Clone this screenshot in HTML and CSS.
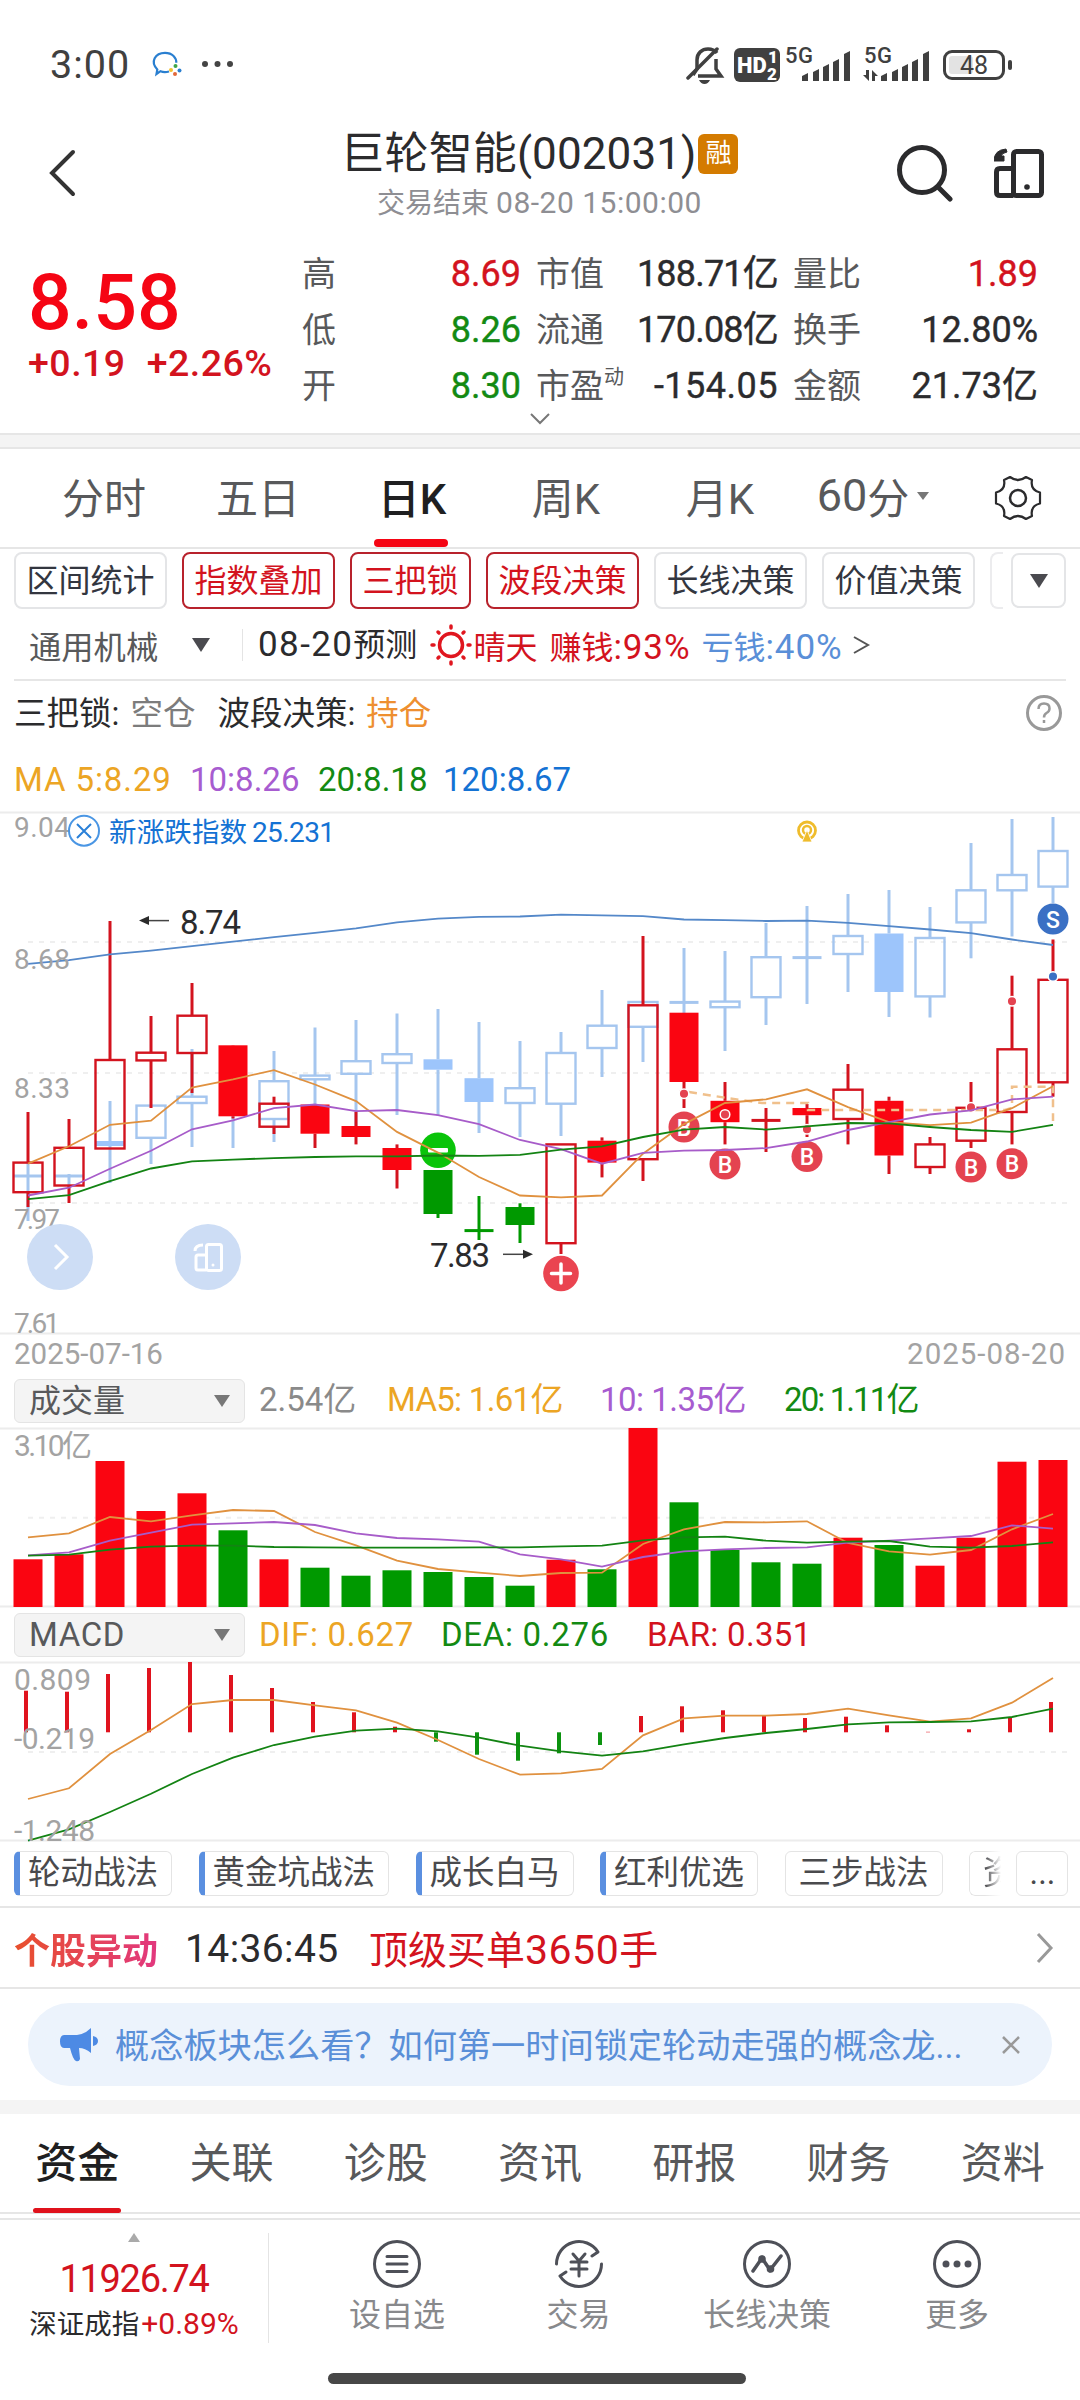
FILE: index.html
```html
<!doctype html>
<html lang="zh-CN">
<head>
    <meta charset="UTF-8">
    <meta name="viewport" content="width=device-width, initial-scale=1.0">
    <title>巨轮智能(002031)</title>
    <link rel="stylesheet" href="styles.css">
</head>
<body>
<div class="status-bar">
    <span class="status-time">3:00</span>
    <svg class="status-chat" width="36" height="36" viewBox="0 0 36 36">
        <path d="M21 25.500c-3 .8-6 .8-8.500-.3L8.500 28l.8-4.500C2 16 7 6.800 17 6.800c7.500 0 11.500 5 11.300 10" fill="none" stroke="#2a7fd0" stroke-width="2.200"/>
        <circle cx="27.500" cy="20" r="2" fill="#3fa64b"/>
        <circle cx="31.500" cy="24.500" r="2" fill="#2a7fd0"/>
        <circle cx="27" cy="28" r="2" fill="#e2683a"/>
        <circle cx="23" cy="24" r="2" fill="#f2c230"/>
    </svg>
    <svg class="status-dots" width="34" height="8"><circle cx="4" cy="4" r="3" fill="#444"/><circle cx="16.500" cy="4" r="3" fill="#444"/><circle cx="29" cy="4" r="3" fill="#444"/></svg>
    <svg class="status-icons" width="330" height="40" viewBox="0 0 330 40">
        <g fill="none" stroke="#404040" stroke-width="3.500">
            <path d="M7 31l4-6v-9c0-7 5-11 11-11 4 0 7 1.500 9 4M30 15v10l5 7H12"/>
            <path d="M2 34L31 5" stroke-linecap="round"/>
        </g>
        <path d="M13 36h11q-2 4-5.500 4T13 36z" fill="#404040"/>
        <rect x="48" y="4" width="46" height="34" rx="6" fill="#404040"/>
        <text x="51" y="29" class="hd-text">HD</text>
        <text x="82" y="19" class="hd-num">1</text>
        <text x="81" y="36" class="hd-num">2</text>
        <text x="99" y="19" class="net-text" textLength="28">5G</text>
        <text x="178" y="19" class="net-text" textLength="28">5G</text>
        <g fill="#404040">
            <path d="M116 32l6-3v8h-6zM127 28l6-3v12h-6zM137 23l6-3v17h-6zM147 18l6-3v22h-6zM158 10l6-3v30h-6z"/>
            <path d="M195 32l6-3v8h-6zM206 28l6-3v12h-6zM216 23l6-3v17h-6zM226 18l6-3v22h-6zM237 10l6-3v30h-6z"/>
            <path d="M180 26h3v11l-6-6h3zM186 37V26l6 6h-3v5z"/>
            <rect x="322" y="16" width="4" height="10" rx="2"/>
        </g>
        <rect x="258.500" y="7.500" width="59" height="27" rx="7.500" fill="none" stroke="#404040" stroke-width="3"/>
        <rect x="263" y="12" width="24" height="18" rx="3" fill="#e3e3e3"/>
        <text x="274" y="29.500" class="battery-text" textLength="28">48</text>
    </svg>
</div>

<div class="header">
    <svg class="back" width="30" height="50" viewBox="0 0 30 50"><path d="M25 4L4 25l21 21" fill="none" stroke="#333" stroke-width="4" stroke-linecap="round"/></svg>
    <div class="header-title">
        <div class="stock-name"><span>巨轮智能(002031)</span><i class="badge">融</i></div>
        <div class="stock-time">交易结束 <em>08-20 15:00:00</em></div>
    </div>
    <svg class="search" width="60" height="60" viewBox="0 0 60 60">
        <g fill="none" stroke="#2b2b2d" stroke-width="5" stroke-linecap="round"><circle cx="27" cy="28" r="22.500"/><path d="M43 45l12 12"/></g>
    </svg>
    <svg class="device" width="50" height="52" viewBox="0 0 50 52">
        <g fill="none" stroke="#2b2b2d" stroke-width="5"><rect x="19.500" y="3.500" width="28" height="44" rx="3"/><path d="M19.500 20.500H6q-3.500 0-3.500 3.500v20q0 3.500 3.500 3.500h13.500"/></g>
        <path d="M12 1Q0 2 0 13h10v-5H7q1-3 6-4z" fill="#2b2b2d" stroke="#2b2b2d"/>
        <circle cx="33" cy="39" r="2.800" fill="#2b2b2d"/>
    </svg>
</div>

<div class="quote">
    <div class="quote-price">
        <div class="price">8.58</div>
        <div class="change"><span>+0.19</span><span>+2.26%</span></div>
    </div>
    <div class="quote-col col-1">
        <p><label>高</label><b class="red">8.69</b></p>
        <p><label>低</label><b class="green">8.26</b></p>
        <p><label>开</label><b class="green">8.30</b></p>
    </div>
    <div class="quote-col col-2">
        <p><label>市值</label><b>188.71亿</b></p>
        <p><label>流通</label><b>170.08亿</b></p>
        <p><label>市盈<sup>动</sup></label><b class="pe">-154.05</b></p>
    </div>
    <div class="quote-col col-3">
        <p><label>量比</label><b class="red">1.89</b></p>
        <p><label>换手</label><b>12.80%</b></p>
        <p><label>金额</label><b>21.73亿</b></p>
    </div>
    <svg class="quote-more" width="20" height="12" viewBox="0 0 20 12"><path d="M1 1l9 9 9-9" fill="none" stroke="#777" stroke-width="2"/></svg>
</div>

<div class="band"></div>

<div class="k-tabs">
    <span class="k-tab">分时</span>
    <span class="k-tab">五日</span>
    <span class="k-tab active">日K</span>
    <span class="k-tab">周K</span>
    <span class="k-tab">月K</span>
    <span class="k-tab min"><em>60</em>分<i class="tri small"></i></span>
    <svg class="gear" width="48" height="48" viewBox="-24 -24 48 48">
        <path d="M-8-21Q0-15 8-21L14-18Q12-8 22-5.500V5.500Q12 8 14 18L8 21Q0 15-8 21L-14 18Q-12 8-22 5.500V-5.500Q-12-8-14-18Z" fill="none" stroke="#2b2b2d" stroke-width="2.200" stroke-linejoin="round"/>
        <circle r="8" fill="none" stroke="#2b2b2d" stroke-width="2.500"/>
    </svg>
</div>

<div class="chips">
    <span class="chip">区间统计</span>
    <span class="chip on">指数叠加</span>
    <span class="chip on">三把锁</span>
    <span class="chip on">波段决策</span>
    <span class="chip">长线决策</span>
    <span class="chip">价值决策</span>
    <span class="chip-cut"></span>
    <span class="chip-more"><i class="tri"></i></span>
</div>

<div class="forecast">
    <span class="industry">通用机械</span>
    <i class="tri"></i>
    <span class="forecast-date"><em>08-20</em>预测</span>
    <svg class="sun" width="42" height="42" viewBox="-21 -21 42 42">
        <circle r="11.500" fill="none" stroke="#e0161f" stroke-width="3.500"/>
        <path d="M0-19v2M0 19v-2M-19 0h2M19 0h-2M-13-13l1 1M13 13l-1-1M13-13l-1 1M-13 13l1-1" stroke="#e0161f" stroke-width="3.500" stroke-linecap="round"/>
    </svg>
    <span class="sunny">晴天</span>
    <span class="earn">赚钱<em>:93%</em></span>
    <span class="lose">亏钱<em>:40%</em></span>
    <svg width="18" height="20" viewBox="0 0 18 20"><path d="M1 2l14 8-14 8" fill="none" stroke="#555" stroke-width="2"/></svg>
</div>

<div class="signals">
    <span>三把锁:</span><span class="empty">空仓</span>
    <span class="wave">波段决策:</span><span class="hold">持仓</span>
    <svg class="help" width="38" height="38" viewBox="0 0 38 38">
        <circle cx="19" cy="19" r="16.500" fill="none" stroke="#999" stroke-width="3"/>
        <path d="M13.500 15q0-5.500 5.500-5.500t5.500 5q0 3-3 4.500-2.500 1.500-2.500 4.500M19 26v3" fill="none" stroke="#999" stroke-width="2.500"/>
    </svg>
</div>

<div class="ma-row">
    <span class="c-orange ma-5">MA 5:8.29</span>
    <span class="c-purple ma-10">10:8.26</span>
    <span class="c-green ma-20">20:8.18</span>
    <span class="c-blue">120:8.67</span>
</div>

<svg id="id-kline" class="chart kline" width="1080" height="522" viewBox="0 0 1080 522"></svg>

<div class="dates"><span>2025-07-16</span><span class="date-end">2025-08-20</span></div>

<div class="indicator vol-head">
    <span class="select">成交量<i class="tri gray"></i></span>
    <span class="v-now">2.54亿</span>
    <span class="c-orange v-5">MA5: 1.61亿</span>
    <span class="c-purple v-10">10: 1.35亿</span>
    <span class="c-green v-20">20: 1.11亿</span>
</div>
<svg id="id-volume" class="chart" width="1080" height="179" viewBox="0 0 1080 179"></svg>

<div class="indicator macd-head">
    <span class="select macd-name">MACD<i class="tri gray"></i></span>
    <span class="c-orange m-dif">DIF: 0.627</span>
    <span class="c-green m-dea">DEA: 0.276</span>
    <span class="c-red m-bar">BAR: 0.351</span>
</div>
<svg id="id-macd" class="chart" width="1080" height="179" viewBox="0 0 1080 179"></svg>

<div class="tags">
    <span class="tag hot">轮动战法</span>
    <span class="tag hot">黄金坑战法</span>
    <span class="tag hot">成长白马</span>
    <span class="tag hot">红利优选</span>
    <span class="tag">三步战法</span>
    <span class="tag tag-cut">资</span>
    <span class="tag-more">...</span>
</div>

<div class="unusual">
    <span class="unusual-logo">个股异动</span>
    <span class="unusual-time">14:36:45</span>
    <span class="unusual-text">顶级买单<em>3650</em>手</span>
    <svg class="arrow" width="20" height="32" viewBox="0 0 20 32"><path d="M3 2l13 14L3 30" fill="none" stroke="#999" stroke-width="3"/></svg>
</div>

<div class="notice-wrap">
    <div class="notice">
        <svg class="horn" width="40" height="34" viewBox="0 0 40 34">
            <path d="M5 7h13Q26 6 32 0v25Q26 20 20 20l1 11q-1 3-4 2-3-1-6-13H5q-4 0-4-6.500T5 7zM34 8q5 1 5 5t-5 5z" fill="#4d8ae4"/>
        </svg>
        <span class="notice-text">概念板块怎么看？如何第一时间锁定轮动走强的概念龙...</span>
        <svg width="18" height="18" viewBox="0 0 18 18"><path d="M1 1l16 16M17 1L1 17" stroke="#999" stroke-width="2.500"/></svg>
    </div>
</div>

<div class="band-plain"></div>

<div class="info-tabs">
    <span class="info-tab active">资金</span>
    <span class="info-tab">关联</span>
    <span class="info-tab">诊股</span>
    <span class="info-tab">资讯</span>
    <span class="info-tab">研报</span>
    <span class="info-tab">财务</span>
    <span class="info-tab">资料</span>
</div>

<div class="bottom-bar">
    <div class="index-box">
        <i class="tri up"></i>
        <div class="index-num">11926.74</div>
        <div class="index-name">深证成指<em class="c-red">+0.89%</em></div>
    </div>
    <div class="bar-item item-1">
        <svg width="50" height="50" viewBox="-25 -25 50 50"><g fill="none" stroke="#4e5058" stroke-width="3" stroke-linecap="round"><circle r="22.500"/><path d="M-10-7.500h20M-10 0h20M-10 7.500h20"/></g></svg>
        <span>设自选</span>
    </div>
    <div class="bar-item item-2">
        <svg width="50" height="50" viewBox="-25 -25 50 50"><g fill="none" stroke="#4e5058" stroke-width="3" stroke-linecap="round" stroke-linejoin="round"><path d="M-22.500 0A22.500 22.500 0 0 1 19-12L13-8M22.500 0A22.500 22.500 0 0 1-19 12l6-4"/><path d="M-6-10l6 7 6-7M0-3v15M-8-2H8M-8 5H8"/></g></svg>
        <span>交易</span>
    </div>
    <div class="bar-item item-3">
        <svg width="50" height="50" viewBox="-25 -25 50 50"><circle r="22.500" fill="none" stroke="#4e5058" stroke-width="3"/><path d="M-14 7L-5-6 3 6 14-8" fill="none" stroke="#4e5058" stroke-width="3.500" stroke-linecap="round"/><circle cx="-5" cy="-5" r="3.800" fill="#4e5058"/><circle cx="3.500" cy="5" r="3.800" fill="#4e5058"/></svg>
        <span>长线决策</span>
    </div>
    <div class="bar-item item-4">
        <svg width="50" height="50" viewBox="-25 -25 50 50"><circle r="22.500" fill="none" stroke="#4e5058" stroke-width="3"/><g fill="#4e5058"><circle cx="-11" r="3.500"/><circle r="3.500"/><circle cx="11" r="3.500"/></g></svg>
        <span>更多</span>
    </div>
</div>
<div class="home-bar"></div>

<script>
    const e = (sel) => document.querySelector(sel)
    const xOf = (i) => 28 + i * 41

    const color = {
        red: '#fa0511', redLine: '#d3131e', green: '#009900', blue: '#a5c6ef', blueFill: '#9dc5fb',
        orange: '#e0913f', purple: '#a75cc9', darkGreen: '#138313', ma120: '#5488c9',
    }

    const line = (x1, y1, x2, y2, stroke, width = 2) =>
        `<line x1="${x1}" y1="${y1}" x2="${x2}" y2="${y2}" stroke="${stroke}" stroke-width="${width}"/>`

    const dash = (y) =>
        `<line x1="28" y1="${y}" x2="1072" y2="${y}" stroke="#efefef" stroke-width="2" stroke-dasharray="5 6"/>`

    const frame = (h) => line(0, 0.5, 1080, 0.5, '#ececec') + line(0, h - 0.5, 1080, h - 0.5, '#ececec')

    const curve = (ys, stroke) => {
        const points = ys.map((y, i) => `${xOf(i)},${y}`).join(' ')
        return `<polyline points="${points}" fill="none" stroke="${stroke}" stroke-width="1.8"/>`
    }

    const text = (x, y, s, cls, len = 0) =>
        `<text x="${x}" y="${y}" class="${cls}"${len ? ` textLength="${len}"` : ''}>${s}</text>`

    // [high, top, bottom, low, type]  h: hollow, f: filled, g: green, d: doji
    const candle = (row, i, stroke, fill) => {
        const [hi, top, bottom, lo, type] = row
        const x = xOf(i)
        const c = type === 'g' ? color.green : stroke
        let s = ''
        if (hi < top) s += line(x, hi, x, top, c, 3)
        if (lo > bottom) s += line(x, bottom, x, lo, c, 3)
        if (type === 'h') {
            s += `<rect x="${x - 14.5}" y="${top}" width="29" height="${bottom - top}" fill="none" stroke="${c}" stroke-width="2.4"/>`
        } else if (bottom === top) {
            s += line(x - 14.5, top, x + 14.5, top, c, 3)
        } else {
            s += `<rect x="${x - 14.5}" y="${top}" width="29" height="${bottom - top}" fill="${type === 'g' ? color.green : fill}"/>`
        }
        return s
    }

    const stock = [
        [300, 350.6, 380.2, 395, 'h'], [307, 335.8, 373.5, 391, 'h'], [109, 248, 336.5, 336.5, 'h'],
        [204, 240.7, 248.4, 296, 'h'], [171, 203.7, 241, 281, 'h'], [233, 233.3, 304.3, 306.5, 'f'],
        [284.7, 291.7, 314.7, 322, 'h'], [292, 292.5, 321.7, 336, 'f'], [300, 314, 325, 332.4, 'f'],
        [332.4, 336, 358, 376.5, 'f'], [358, 358, 402, 406, 'g'], [384, 418.6, 418.6, 428, 'g'],
        [391.3, 395, 413, 431, 'g'], [332, 332.4, 431.2, 442, 'h'], [325.4, 328.7, 350.6, 365.4, 'f'],
        [124, 193.3, 347.2, 369, 'h'], [200.7, 200.7, 270, 296, 'f'], [270, 288.8, 310.2, 332.4, 'f'],
        [296, 308.4, 308.4, 340, 'd'], [292, 296, 303.2, 325, 'f'], [252, 277.7, 307, 332.4, 'h'],
        [284.7, 288.8, 343.5, 362, 'f'], [325, 332.4, 355, 362, 'h'], [270, 295.8, 328.7, 336, 'h'],
        [163.7, 237.3, 300, 332.4, 'h'], [127.5, 167.8, 270.3, 284.7, 'h'],
    ]

    const overlay = [
        [350, 364, 364, 409, 'd'], [362, 364, 364, 376, 'd'], [289, 329, 334, 371, 'f'],
        [293, 293.6, 325.8, 352, 'h'], [237, 284.7, 291, 335, 'h'], [300, 302, 304, 336, 'f'],
        [239, 269.2, 307, 330, 'h'], [215.5, 263.6, 267.3, 300, 'h'], [208, 249.2, 261.8, 314, 'h'],
        [201.5, 242.2, 251, 303, 'h'], [197, 247.3, 257.7, 303.6, 'f'], [210, 266.2, 290, 321, 'f'],
        [229, 276.2, 291, 325, 'h'], [220, 241, 291.7, 324, 'h'], [178, 213.7, 236, 265, 'h'],
        [190, 190, 214.8, 250, 'h'], [136, 190.4, 190.4, 201, 'd'], [139, 189.6, 195.2, 239, 'h'],
        [111, 145.2, 185.2, 213, 'h'], [94, 145.6, 145.6, 192, 'd'], [82, 124, 142, 180, 'h'],
        [78, 121.5, 180, 205, 'f'], [95, 126, 184.4, 205.5, 'h'], [31, 78.3, 110.4, 146.3, 'h'],
        [7, 63, 78.3, 124.5, 'h'], [5, 39, 74.6, 91, 'h'],
    ]

    const ma = {
        5: [351.7, 334.3, 312.8, 308.7, 275.5, 267.3, 258.1, 272.5, 289.1, 319.9, 340.6, 365, 383.5, 385.3, 383.5, 341.7, 312.1, 291, 287.3, 277.3, 295.1, 310.2, 313.2, 310.6, 296.2, 274.3],
        10: [383.5, 375.7, 356.8, 338.7, 317.3, 308.4, 296.2, 292.5, 299.1, 298, 303.2, 312.1, 328, 337.2, 351.7, 340.9, 338.7, 338, 336.1, 329.5, 318, 310.2, 302.5, 298.4, 287.3, 284.7],
        20: [387.2, 383.1, 369.1, 356.5, 349.4, 347.6, 346.1, 345, 344.3, 344.3, 343.5, 343.9, 342.8, 337.6, 334.3, 325, 317.6, 315, 317.6, 314.3, 311, 311.3, 315, 318, 319.9, 312.8],
        120: [151.9, 148.2, 142.3, 138.6, 134.1, 129.7, 125.2, 120.8, 116.4, 110.4, 106.7, 104.9, 104.5, 102.7, 103.4, 104.2, 107.5, 108.2, 109, 108.6, 110.8, 114.1, 117.5, 121.2, 127.5, 133],
    }

    const mark = (i, y, letter, fill) =>
        `<circle cx="${xOf(i)}" cy="${y}" r="15.5" fill="${fill}"/>` + text(xOf(i), y + 8.5, letter, 'mark')

    const dot = (i, y, fill) =>
        `<circle cx="${xOf(i)}" cy="${y}" r="4.8" fill="${fill}" stroke="#fff" stroke-width="1.5"/>`

    const drawKline = () => {
        const bg = '#e44350'
        let s = frame(522) + dash(130) + dash(261) + dash(391)
        s += overlay.map((r, i) => candle(r, i, color.blue, color.blueFill)).join('')
        s += stock.map((r, i) => candle(r, i, color.redLine, color.red)).join('')
        s += [[16, 315], [17, 352], [19, 344.6], [23, 355], [24, 351.7]].map(([i, y]) => mark(i, y, 'B', bg)).join('')
        s += mark(25, 107, 'S', '#3a70c4')
        s += '<circle cx="438" cy="338.300" r="17.800" fill="#0ac40a"/><rect x="428" y="336" width="20" height="4.500" rx="1" fill="#fff"/>'
        s += '<circle cx="561" cy="461.500" r="17.800" fill="#ea4450"/><path d="M551.500 461.500h19M561 452v19" stroke="#fff" stroke-width="3.500" stroke-linecap="round"/>'
        s += '<path d="M689 280l38 6 35 5h46v7h197l7-2v-21.300h41V309" fill="none" stroke="#f0c08c" stroke-width="2.500" stroke-dasharray="8 6"/>'
        s += [[16, 281.7], [17, 302.5], [19, 317.3], [23, 295.4], [24, 189.3]].map(([i, y]) => dot(i, y, bg)).join('')
        s += dot(25, 164.5, '#3a70c4')
        s += curve(ma[120], color.ma120) + curve(ma[5], color.orange) + curve(ma[10], color.purple) + curve(ma[20], color.darkGreen)
        s += [['9.04', 25], ['8.68', 156.7], ['8.33', 286], ['7.97', 417], ['7.61', 521]].map(([t, y]) => text(14, y, t, 'axis', t[0] === '7' ? 46 : 56)).join('')
        // overlay index name
        s += '<circle cx="84" cy="18.700" r="15" fill="#fff" stroke="#4a96e4" stroke-width="2"/><path d="M77 12l14 14M91 12L77 26" stroke="#2a80d8" stroke-width="2"/>'
        s += text(109, 29.5, '新涨跌指数', 'index-label', 138) + text(252, 30, '25.231', 'index-value', 83)
        // high and low of the range
        s += text(180, 121.5, '8.74', 'peak', 61) + line(147, 108.6, 169, 108.6, '#444', 1.5) + '<path d="M139 108.600l10-4.500v9z" fill="#2b2b2b"/>'
        s += text(430, 455.3, '7.83', 'peak', 60) + line(503, 442.3, 525, 442.3, '#444', 1.5) + '<path d="M533 442.300l-10-4.500v9z" fill="#2b2b2b"/>'
        // broadcast mark
        s += '<circle cx="807" cy="18.500" r="8.500" fill="none" stroke="#efbc2c" stroke-width="2.800"/><circle cx="807" cy="18" r="4" fill="none" stroke="#efbc2c" stroke-width="2.500"/><path d="M807 18l5 12h-10z" fill="#efbc2c" stroke="#fff" stroke-width=".8"/>'
        // floating buttons
        s += '<g fill="#cdddf5"><circle cx="60" cy="445" r="33"/><circle cx="208" cy="445" r="33"/></g>'
        s += '<g fill="none" stroke="#fff" stroke-width="3"><path d="M55 433l12 12-12 12"/><rect x="206.500" y="432.500" width="15" height="26" rx="2"/><path d="M206 443h-8q-2 0-2 2v11q0 2 2 2h8M195 439q0-6 8-6" /></g><circle cx="213" cy="453" r="1.500" fill="#fff"/>'
        e('#id-kline').innerHTML = s
    }

    const drawVolume = () => {
        const tops = [131.3, 126.3, 33, 83, 65.3, 102.3, 131.3, 139.7, 147.7, 142.3, 144, 149, 157.7, 131.7, 141.3, 0, 74.3, 122, 134.3, 135.7, 109.7, 117, 137.7, 109.7, 33.7, 32]
        const kinds = 'rrrrrgrggggggrgrggggrgrrrr'
        let s = frame(179) + dash(89.7)
        s += tops.map((y, i) => `<rect x="${xOf(i) - 14.5}" y="${y}" width="29" height="${179 - y}" fill="${kinds[i] === 'r' ? color.red : color.green}"/>`).join('')
        s += curve([109.3, 105.3, 89, 93.3, 87.3, 82, 83, 104, 117.3, 132.7, 141, 144.7, 148, 145, 144.7, 116, 101.3, 94, 94.3, 93.3, 115, 123.3, 126.7, 122, 101.3, 86], color.orange)
        s += curve([127.3, 124.3, 112.7, 104.7, 96.7, 95.3, 94, 97, 105.3, 110, 111.3, 113.7, 126.3, 131.3, 138.7, 129, 123.3, 121.3, 120, 119.3, 114.7, 112.7, 110.3, 108, 97.3, 100.7], color.purple)
        s += curve([127.7, 126.7, 121.7, 118.7, 117.7, 117.7, 119, 119.3, 119.7, 119.7, 119.7, 119.3, 119.3, 118.3, 117.7, 112.3, 109.3, 108.7, 112.7, 114.7, 113.7, 113, 118.7, 119.7, 118, 114.3], color.darkGreen)
        s += text(14, 28, '3.10亿', 'axis big', 78)
        e('#id-volume').innerHTML = s
    }

    const drawMacd = () => {
        const zero = 70.3
        const bars = [28.7, 29.7, 12, 6, 0, 13, 26, 40, 50.3, 64.7, 79.7, 92.7, 98.7, 91.3, 83, 54, 44.3, 48.3, 54, 56, 54.7, 63.3, 69.8, 67.3, 55, 40]
        let s = frame(179) + dash(90)
        s += bars.map((y, i) => line(xOf(i) - 2, zero, xOf(i) - 2, y, y < zero ? '#e0131e' : '#0c930f', 4)).join('')
        s += curve([137, 126.3, 92, 68, 42, 38, 38, 43.3, 48.3, 60.7, 78, 97, 112.7, 111.3, 107, 73.3, 56.3, 53.7, 53.7, 52, 46.7, 53.3, 59.7, 56.3, 40.7, 16], color.orange)
        s += curve([178.7, 167.3, 150, 131.7, 112, 95.7, 83, 74.7, 68.7, 66.7, 69.3, 75.7, 83.7, 89.3, 93.7, 89.3, 82.3, 76, 71, 67, 62.3, 60.3, 60, 59.3, 55, 46.7], color.darkGreen)
        s += text(14, 28, '0.809', 'axis big', 77) + text(14, 86.7, '-0.219', 'axis big', 81) + text(14, 178.7, '-1.248', 'axis big', 81)
        e('#id-macd').innerHTML = s
    }

    drawKline()
    drawVolume()
    drawMacd()
</script>
</body>
</html>
```

FILE: styles.css
```css
* {
    box-sizing: border-box;
}
body {
    margin: 0;
    width: 1080px;
    height: 2400px;
    overflow: hidden;
    background: #fff;
    color: #2b2b2d;
    font-family: Roboto, "Noto Sans CJK SC", sans-serif;
    font-size: 32px;
}
p {
    margin: 0;
}
i, b, em {
    font-style: normal;
    font-weight: 400;
}
svg {
    display: block;
    flex: none;
}
span {
    white-space: nowrap;
}
.red, .c-red {
    color: #d3131e;
}
.green, .c-green {
    color: #138a13;
}
.c-orange {
    color: #eca524;
}
.c-purple {
    color: #a75cd0;
}
.c-blue {
    color: #1472d4;
}
.tri {
    display: inline-block;
    flex: none;
    border: 9px solid transparent;
    border-top: 14px solid #4a4a4f;
    border-bottom: 0;
}
.tri.small {
    border-width: 8px 6px 0;
    border-top-color: #777;
    margin-left: 8px;
}
.tri.gray {
    border-width: 12px 8px 0;
    border-top-color: #777;
}
.tri.up {
    border-width: 0 6px 9px;
    border-bottom: 9px solid #aaa;
}

/* status bar */
.status-bar {
    display: flex;
    align-items: center;
    height: 128px;
    padding-left: 50px;
    color: #404040;
}
.status-time {
    width: 98px;
    font-size: 39.500px;
    letter-spacing: 1px;
}
.status-dots {
    margin-left: 17px;
    margin-top: -1px;
}
.status-icons {
    margin-left: auto;
    margin-right: 64px;
}
.hd-text {
    font: 900 22px Roboto, sans-serif;
    fill: #fff;
}
.hd-num {
    font: 900 17px Roboto, sans-serif;
    fill: #fff;
}
.net-text {
    font: 500 22px Roboto, sans-serif;
    fill: #404040;
}
.battery-text {
    font: 400 25px Roboto, sans-serif;
    fill: #404040;
}

/* header */
.header {
    display: flex;
    height: 117px;
    padding: 0 36px 0 48px;
}
.back {
    margin-top: 20px;
}
.header-title {
    flex: 1;
    padding-left: 106px;
}
.stock-name {
    display: flex;
    align-items: center;
    justify-content: center;
    height: 48px;
    font-size: 44px;
    line-height: 44px;
}
.stock-name span {
    margin-top: 4px;
    letter-spacing: 0.100px;
}
.badge {
    width: 40px;
    height: 40px;
    margin-left: 2px;
    margin-top: 4px;
    border-radius: 6px;
    background: #d47b00;
    color: #fff;
    font-size: 26px;
    line-height: 39px;
    text-align: center;
}
.stock-time {
    line-height: 53px;
    font-size: 28px;
    text-align: center;
    color: #8e8e93;
}
.stock-time em {
    font-size: 30px;
    letter-spacing: 0.500px;
}
.search {
    margin-top: 14px;
}
.device {
    margin: 20px 0 0 39px;
}

/* quote */
.quote {
    display: flex;
    position: relative;
    height: 188px;
    padding-left: 28px;
}
.quote-price {
    width: 274px;
}
.price {
    margin-top: 24px;
    height: 68px;
    line-height: 68px;
    font-size: 77px;
    font-weight: 500;
    color: #f50514;
}
.change {
    display: flex;
    gap: 21px;
    line-height: 52px;
    font-size: 37.500px;
    font-weight: 500;
    letter-spacing: 0.500px;
    color: #d3131e;
}
.quote-col {
    padding-top: 1px;
}
.quote-col p {
    display: flex;
    justify-content: space-between;
    height: 56px;
    line-height: 57px;
    font-size: 34px;
}
.quote-col b {
    font-size: 36px;
    -webkit-text-stroke: 0.400px;
}
.quote-col label {
    color: #58595b;
}
.quote-col sup {
    position: relative;
    top: -14px;
    font-size: 20px;
    line-height: 0;
    vertical-align: baseline;
}
.col-1 {
    width: 219px;
}
.col-2 {
    width: 242px;
    margin-left: 15px;
}
.quote-col.col-2 b {
    letter-spacing: -0.800px;
}
.quote-col.col-2 b.pe {
    letter-spacing: 0.500px;
}
.col-3 {
    width: 245px;
    margin-left: 15px;
}
.quote-more {
    position: absolute;
    left: 530px;
    top: 168px;
}
.band {
    height: 16px;
    border-top: 2px solid #e6e6e6;
    border-bottom: 2px solid #e6e6e6;
    background: #f4f4f4;
}

/* k-line period tabs */
.k-tabs {
    display: flex;
    align-items: center;
    height: 100px;
    padding-left: 27px;
    border-bottom: 2px solid #e6e6e6;
}
.k-tab {
    display: flex;
    align-items: center;
    justify-content: center;
    position: relative;
    width: 154px;
    height: 98px;
    padding-bottom: 5px;
    font-size: 42px;
    color: #58595b;
}
.k-tab em {
    font-size: 45px;
}
.k-tab.min {
    padding-right: 2px;
}
.k-tab.active {
    color: #1f1f21;
    font-weight: 500;
}
.k-tab.active::after {
    content: '';
    position: absolute;
    bottom: 0;
    left: 39px;
    width: 74px;
    height: 8px;
    border-radius: 4px;
    background: #f50514;
}
.gear {
    margin-left: 43px;
}

/* chips */
.chips {
    display: flex;
    gap: 15px;
    height: 60px;
    padding: 3px 14px 0;
}
.chip {
    flex: none;
    height: 57px;
    padding: 0 10.500px;
    border: 2px solid #e4e5e7;
    border-radius: 8px;
    line-height: 54px;
    color: #33363f;
}
.chip.on {
    border-color: #b8222c;
    color: #d3131e;
}
.chip-cut {
    width: 13px;
    height: 57px;
    border: 2px solid #ececee;
    border-right: 0;
    border-radius: 8px 0 0 8px;
}
.chip-more {
    display: flex;
    align-items: center;
    justify-content: center;
    width: 55px;
    height: 55px;
    margin: 1px 0 0 -7px;
    border: 2px solid #e4e5e7;
    border-radius: 8px;
}

/* forecast */
.forecast {
    display: flex;
    align-items: center;
    height: 72px;
    margin: 0 14px;
    padding: 2px 0 0 15px;
    border-bottom: 2px solid #e6e6e6;
}
.industry {
    width: 163px;
    font-size: 32.300px;
    color: #58595b;
}
.forecast em {
    font-size: 35px;
}
.forecast-date {
    margin: 0 13px 0 32px;
    padding-left: 15px;
    border-left: 1px solid #e4e4e4;
    line-height: 32px;
}
.forecast-date em {
    letter-spacing: 1.400px;
}
.sunny, .earn {
    color: #d3131e;
}
.sunny {
    margin-left: 1px;
}
.earn {
    margin: 0 11px 0 12px;
}
.earn em, .lose em {
    letter-spacing: 0.900px;
}
.lose {
    margin-right: 10px;
    color: #5a8fd8;
}
.signals {
    display: flex;
    align-items: center;
    height: 66px;
    padding: 0 17px 0 14px;
    font-size: 32.500px;
}
.signals span {
    margin-top: -7px;
}
.empty {
    margin-left: 11px;
    color: #7c7c7c;
}
.wave {
    margin-left: 22px;
}
.hold {
    margin-left: 11px;
    color: #ee8f30;
}
.help {
    margin-left: auto;
    margin-top: -3px;
}
.ma-row {
    display: flex;
    height: 65px;
    padding-left: 14px;
    font-size: 33px;
    line-height: 65px;
}
.ma-5 {
    width: 176px;
    letter-spacing: 0.900px;
}
.ma-10 {
    width: 128px;
}
.ma-20 {
    width: 125px;
}

/* charts */
.chart {
    overflow: visible;
}
.axis {
    font-size: 28px;
    fill: #a3a3a3;
}
.axis.big {
    font-size: 30px;
}
.index-label {
    font-size: 27.500px;
    fill: #1472d4;
}
.index-value {
    font-size: 28px;
    fill: #1472d4;
}
.peak {
    font-size: 33px;
    fill: #2b2b2d;
}
.mark {
    font-size: 23px;
    font-weight: 500;
    text-anchor: middle;
    fill: #fff;
}
.dates {
    display: flex;
    justify-content: space-between;
    height: 40px;
    padding: 0 14px;
    font-size: 29.500px;
    line-height: 40px;
    color: #a3a3a3;
}
.date-end {
    letter-spacing: 1px;
}
.indicator {
    display: flex;
    align-items: center;
    height: 54px;
    padding: 0 0 0 14px;
    font-size: 33px;
    line-height: 38px;
}
.vol-head > span:not(.select) {
    margin-top: -2px;
}
.indicator.macd-head {
    height: 55px;
}
.select {
    display: flex;
    align-items: center;
    justify-content: space-between;
    width: 231px;
    height: 44px;
    margin-right: 14px;
    padding: 0 14px 0 14px;
    border: 1px solid #e4e4e4;
    border-radius: 6px;
    background: #f4f4f4;
    font-size: 32px;
    color: #58595b;
}
.macd-name {
    font-size: 33px;
    letter-spacing: 0.600px;
}
.v-now {
    width: 128px;
    color: #8a8a8a;
}
.v-5 {
    width: 213px;
    letter-spacing: -0.700px;
}
.v-10 {
    width: 184px;
    letter-spacing: -0.500px;
}
.v-20 {
    letter-spacing: -1.900px;
}
.m-dif {
    width: 182px;
    letter-spacing: 0.700px;
}
.m-dea {
    width: 206px;
    letter-spacing: 0.700px;
}
.m-bar {
    letter-spacing: 0.300px;
}

/* strategy tags */
.tags {
    display: flex;
    gap: 26.500px;
    height: 67px;
    padding: 10px 14px 0;
    border-bottom: 2px solid #e6e6e6;
}
.tag, .tag-more {
    flex: none;
    height: 45px;
    padding: 0 13px 0 13px;
    border: 1px solid #e4e4e4;
    border-radius: 6px;
    font-size: 32.500px;
    line-height: 42px;
    color: #4a4a4d;
}
.tag.hot {
    padding-left: 8px;
    border-left: 6px solid #5a8fe0;
}
.tag-cut {
    width: 32px;
    overflow: hidden;
    border-right: 0;
    border-radius: 6px 0 0 6px;
    -webkit-mask-image: linear-gradient(90deg, #000 50%, transparent);
    mask-image: linear-gradient(90deg, #000 50%, transparent);
}
.tag-more {
    width: 52px;
    margin-left: -12px;
}

.unusual {
    display: flex;
    align-items: center;
    height: 81px;
    padding: 0 25px 0 14px;
    border-bottom: 2px solid #e6e6e6;
    font-size: 39px;
}
.unusual-logo {
    width: 171px;
    font-size: 36px;
    font-weight: 700;
    background: linear-gradient(90deg, #e8502c, #e2387e 143px);
    -webkit-background-clip: text;
    background-clip: text;
    color: transparent;
}
.unusual-time {
    width: 184px;
    margin-top: 2px;
    letter-spacing: 0.400px;
}
.unusual-text {
    margin-top: -2px;
    color: #d3131e;
}
.unusual-text em {
    font-size: 41px;
    letter-spacing: 0.500px;
}
.arrow {
    margin-left: auto;
}
.notice-wrap {
    padding: 14px 28px;
}
.notice {
    display: flex;
    align-items: center;
    height: 83px;
    padding-left: 31px;
    border-radius: 42px;
    background: #ecf3fc;
}
.notice-text {
    width: 903px;
    margin-top: -4px;
    padding-left: 16px;
    font-size: 34.200px;
    color: #5a8fd8;
}
.band-plain {
    height: 14px;
    background: #f4f4f4;
}

/* info tabs */
.info-tabs {
    display: flex;
    height: 100px;
    border-bottom: 2px solid #e6e6e6;
}
.info-tab {
    flex: 1;
    position: relative;
    line-height: 99px;
    font-size: 42px;
    text-align: center;
    color: #58595b;
}
.info-tab.active {
    color: #1f1f21;
    font-weight: 500;
}
.info-tab.active::after {
    content: '';
    position: absolute;
    left: 33px;
    bottom: -1px;
    width: 88px;
    height: 5px;
    border-radius: 3px;
    background: #e0121c;
}

/* bottom bar */
.bottom-bar {
    display: flex;
    height: 155px;
    margin-top: 4px;
    border-top: 2px solid #e6e6e6;
}
.index-box {
    display: flex;
    flex-direction: column;
    align-items: center;
    width: 269px;
    height: 110px;
    margin-top: 13px;
    border-right: 1px solid #e4e4e4;
}
.index-num {
    margin-top: 11px;
    line-height: 52px;
    font-size: 38px;
    letter-spacing: -1.300px;
    color: #d3131e;
}
.index-name {
    line-height: 38px;
    font-size: 27.500px;
}
.index-name em {
    margin-left: 2px;
    font-size: 30px;
}
.bar-item {
    display: flex;
    flex-direction: column;
    align-items: center;
    padding-top: 19px;
    color: #88898c;
}
.bar-item span {
    margin-top: 4px;
    line-height: 44px;
}
.item-1 {
    width: 182px;
    margin-left: 37px;
}
.item-2 {
    width: 181px;
}
.item-3 {
    width: 196px;
}
.item-4 {
    width: 184px;
}
.home-bar {
    width: 418px;
    height: 11px;
    margin-left: 328px;
    border-radius: 6px;
    background: #474747;
}
```
